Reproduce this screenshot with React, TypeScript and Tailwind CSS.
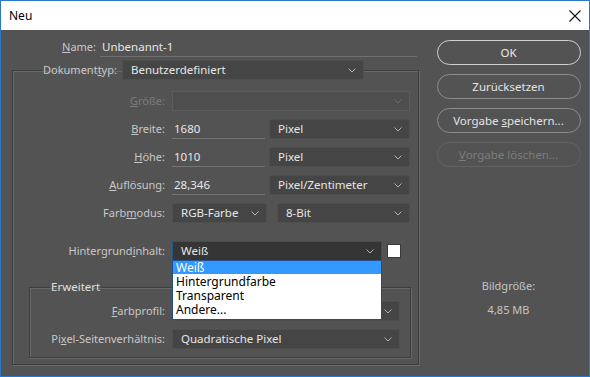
import React from 'react';

const font = { fontFamily: '"Noto Sans", "Open Sans", sans-serif' };

const Chevron: React.FC<{ dim?: boolean }> = ({ dim }) => (
  <svg width="8" height="5" viewBox="0 0 8 5" className="shrink-0">
    <path d="M0.5 0.5 L4 4 L7.5 0.5" fill="none" stroke={dim ? '#6a6a6a' : '#b4b4b4'} strokeWidth="1" />
  </svg>
);

const Select: React.FC<{ value?: string; w: string; dim?: boolean }> = ({ value, w, dim }) => (
  <div
    className={`${w} h-[20px] flex items-center justify-between pl-[8px] pr-[7px] border ${
      dim ? 'bg-[#4e4e4e] border-[#5c5c5c]' : 'bg-[#454545] border-[#4f4f4f]'
    } text-[#e6e6e6] text-[11.5px]`}
  >
    <span className="leading-none">{value}</span>
    <Chevron dim={dim} />
  </div>
);

const TextInput: React.FC<{ value: string; w: string }> = ({ value, w }) => (
  <div className={`${w} h-[20px] flex items-center pl-[2px] border-b border-[#747474] text-[#e6e6e6] text-[11.5px]`}>
    <span className="leading-none">{value}</span>
  </div>
);

const Row: React.FC<{ label: React.ReactNode; lw: string; dim?: boolean; children: React.ReactNode }> = ({
  label,
  lw,
  dim,
  children,
}) => (
  <div className="flex items-center h-[20px]">
    <div className={`${lw} shrink-0 text-right pr-[7px] ${dim ? 'text-[#7a7a7a]' : 'text-[#c8c8c8]'}`}>{label}</div>
    {children}
  </div>
);

const groove = 'border border-[#3f3f3f] shadow-[inset_1px_1px_0_#676767,1px_1px_0_#676767]';

const PillButton: React.FC<{ children: React.ReactNode; primary?: boolean; disabled?: boolean }> = ({
  children,
  primary,
  disabled,
}) => (
  <div
    className={`h-[25px] w-[144px] rounded-full flex items-center justify-center text-[11.5px] ${
      primary
        ? 'border-[1.5px] border-[#cfcfcf] text-[#e8e8e8]'
        : disabled
        ? 'border border-[#626262] text-[#7c7c7c]'
        : 'border border-[#8c8c8c] text-[#e4e4e4]'
    }`}
  >
    {children}
  </div>
);

export default function App() {
  return (
    <div style={font} className="w-[590px] h-[377px] border border-[#2b78c8] flex flex-col text-[11px] select-none">
      <div className="h-[29px] bg-white flex items-center justify-between pl-[8px] pr-[8px] shrink-0">
        <span className="text-[12px] text-black">Neu</span>
        <svg width="12" height="12" viewBox="0 0 12 12">
          <path d="M0.5 0.5 L11.5 11.5 M11.5 0.5 L0.5 11.5" stroke="#111" strokeWidth="1.1" />
        </svg>
      </div>

      <div className="flex-1 bg-[#535353] flex">
        <div className="w-[420px] shrink-0 flex flex-col">
          <div className="flex items-center h-[20px] mt-[7px]">
            <div className="w-[99px] text-right pr-[4px] text-[#c8c8c8]">
              <u>N</u>ame:
            </div>
            <div className="w-[317px] h-[20px] flex items-center pl-[2px] border-b border-[#6e6e6e] text-[#e6e6e6] text-[11.5px]">
              Unbenannt-1
            </div>
          </div>

          <fieldset className={`mt-[3px] ml-[11px] w-[407px] pb-[6px] ${groove}`}>
            <legend className="ml-[30px] px-0">
              <div className="flex items-center h-[20px]">
                <span className="text-[#c8c8c8] pr-[5px]">
                  Dokument<u>t</u>yp:
                </span>
                <Select value="Benutzerdefiniert" w="w-[242px]" />
              </div>
            </legend>

            <div className="flex flex-col gap-[8px] pt-[11px]">
              <Row label={<><u>G</u>röße:</>} lw="w-[159px]" dim>
                <Select w="w-[238px]" dim />
              </Row>
              <Row label={<><u>B</u>reite:</>} lw="w-[159px]">
                <TextInput value="1680" w="w-[93px]" />
                <div className="ml-[4px]">
                  <Select value="Pixel" w="w-[141px]" />
                </div>
              </Row>
              <Row label={<><u>H</u>öhe:</>} lw="w-[159px]">
                <TextInput value="1010" w="w-[93px]" />
                <div className="ml-[4px]">
                  <Select value="Pixel" w="w-[141px]" />
                </div>
              </Row>
              <Row label={<><u>A</u>uflösung:</>} lw="w-[159px]">
                <TextInput value="28,346" w="w-[93px]" />
                <div className="ml-[4px]">
                  <Select value="Pixel/Zentimeter" w="w-[141px]" />
                </div>
              </Row>
              <Row label={<>Farb<u>m</u>odus:</>} lw="w-[159px]">
                <Select value="RGB-Farbe" w="w-[95px]" />
                <div className="ml-[10px]">
                  <Select value="8-Bit" w="w-[133px]" />
                </div>
              </Row>
            </div>

            <div className="mt-[18px]">
              <Row label={<>Hintergrund<u>i</u>nhalt:</>} lw="w-[159px]">
                <div className="relative">
                  <div className="w-[210px] h-[20px] flex items-center justify-between pl-[8px] pr-[7px] border border-[#24538f] bg-[#353535] text-[#e6e6e6] text-[11.5px]">
                    <span className="leading-none">Weiß</span>
                    <Chevron />
                  </div>
                  <div className="absolute left-0 top-[20px] w-[210px] h-[59px] bg-white border border-[#1d4f8e] border-t-0 z-10 text-black text-[12px] leading-[14px]">
                    <div className="bg-[#3399ff] text-white h-[13px] leading-[13px] pl-[3px]">Weiß</div>
                    <div className="pl-[3px] mt-[1px]">Hintergrundfarbe</div>
                    <div className="pl-[3px]">Transparent</div>
                    <div className="pl-[3px]">Andere...</div>
                  </div>
                </div>
                <div className="ml-[5px] w-[14px] h-[14px] bg-white border border-[#3a3a3a]" />
              </Row>
            </div>

            <fieldset className={`mt-[18px] ml-[16px] mr-[7px] pb-[8px] ${groove}`}>
              <legend className="ml-[20px] px-[1px] text-[#dedede] leading-[16px] text-[11.5px]">Erweitert</legend>
              <div className="flex flex-col gap-[8px] pt-[6px]">
                <Row label={<><u>F</u>arbprofil:</>} lw="w-[142px]">
                  <Select value="" w="w-[228px]" />
                </Row>
                <Row label={<>Pi<u>x</u>el-Seitenverhältnis:</>} lw="w-[142px]">
                  <Select value="Quadratische Pixel" w="w-[228px]" />
                </Row>
              </div>
            </fieldset>
          </fieldset>
        </div>

        <div className="flex-1 flex flex-col items-center pl-[7px]">
          <div className="flex flex-col gap-[9px] mt-[10px]">
            <PillButton primary>OK</PillButton>
            <PillButton>Zurücksetzen</PillButton>
            <PillButton>
              Vorgabe&nbsp;<u>s</u>peichern...
            </PillButton>
            <PillButton disabled>
              <u>V</u>orgabe löschen...
            </PillButton>
          </div>
          <div className="mt-[111px] text-[#c4c4c4] text-center">Bildgröße:</div>
          <div className="mt-[7px] text-[#c4c4c4] text-center">4,85 MB</div>
        </div>
      </div>
    </div>
  );
}
